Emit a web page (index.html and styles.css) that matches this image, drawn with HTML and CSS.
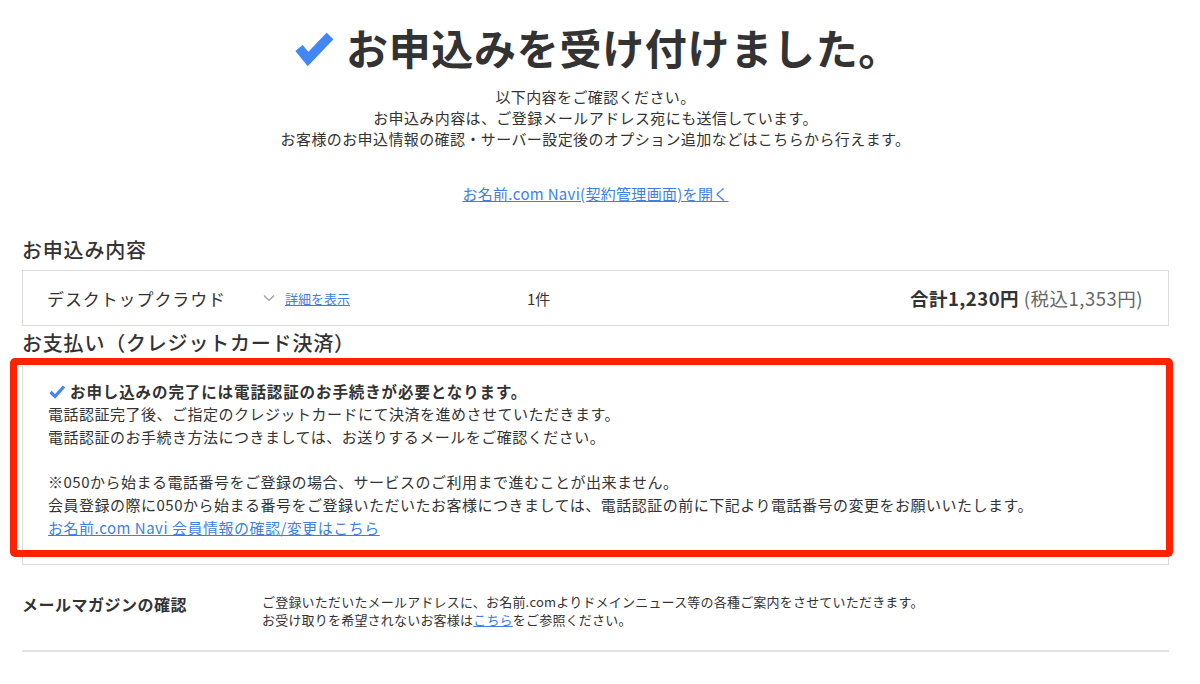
FILE: index.html
```html
<!DOCTYPE html>
<html lang="ja">
<head>
<meta charset="utf-8">
<title>お申込みを受け付けました。</title>
<link rel="stylesheet" href="styles.css">
</head>
<body>
<main class="page">
  <header class="hero">
    <h1 class="hero-title">
      <svg class="hero-check" width="46" height="44" viewBox="0 0 46 44" aria-hidden="true"><polyline points="9,23 18,34 40,11" fill="none" stroke="#4285f4" stroke-width="9.5"/></svg>
      <span>お申込みを受け付けました。</span>
    </h1>
    <p class="hero-lead">以下内容をご確認ください。<br>お申込み内容は、ご登録メールアドレス宛にも送信しています。<br>お客様のお申込情報の確認・サーバー設定後のオプション追加などはこちらから行えます。</p>
    <p class="hero-link"><a href="#">お名前.com Navi(契約管理画面)を開く</a></p>
  </header>

  <section class="section">
    <h2 class="section-title">お申込み内容</h2>
    <div class="order-box">
      <div class="order-left">
        <span class="order-name">デスクトップクラウド</span>
        <svg class="chevron" width="12" height="8" viewBox="0 0 12 8" aria-hidden="true"><polyline points="1,1.5 6,6.5 11,1.5" fill="none" stroke="#999" stroke-width="1.2"/></svg>
        <a href="#" class="detail-link">詳細を表示</a>
      </div>
      <span class="order-qty">1件</span>
      <span class="order-price"><b>合計1,230円</b> <span class="tax">(税込1,353円)</span></span>
    </div>
  </section>

  <section class="section">
    <h2 class="section-title pay-title">お支払い（クレジットカード決済）</h2>
    <div class="pay-wrap">
      <div class="pay-box">
        <p class="pay-lead"><svg class="small-check" width="18" height="15" viewBox="0 0 18 15" aria-hidden="true"><polyline points="2.5,8 7,12.5 16,2.5" fill="none" stroke="#4285f4" stroke-width="3.2"/></svg>お申し込みの完了には電話認証のお手続きが必要となります。</p>
        <p>電話認証完了後、ご指定のクレジットカードにて決済を進めさせていただきます。<br>電話認証のお手続き方法につきましては、お送りするメールをご確認ください。</p>
        <p class="pay-note">※050から始まる電話番号をご登録の場合、サービスのご利用まで進むことが出来ません。<br>会員登録の際に050から始まる番号をご登録いただいたお客様につきましては、電話認証の前に下記より電話番号の変更をお願いいたします。<br><a href="#">お名前.com Navi 会員情報の確認/変更はこちら</a></p>
      </div>
      <div class="highlight" aria-hidden="true"></div>
    </div>
  </section>

  <section class="mail-row">
    <h3 class="mail-title">メールマガジンの確認</h3>
    <p class="mail-text">ご登録いただいたメールアドレスに、お名前.comよりドメインニュース等の各種ご案内をさせていただきます。<br>お受け取りを希望されないお客様は<a href="#">こちら</a>をご参照ください。</p>
  </section>
</main>
</body>
</html>
```

FILE: styles.css
```css
* { box-sizing: border-box; }
html, body { margin: 0; padding: 0; background: #fff; }
body {
  font-family: "Noto Sans CJK JP", "Noto Sans", sans-serif;
  color: #333;
  width: 1200px;
  height: 684px;
  overflow: hidden;
}
a { color: #3d7fe6; text-decoration: underline; }
p, h1, h2, h3 { margin: 0; }

.page { padding: 0 31px 0 22px; }

.hero { text-align: center; padding-top: 19px; }
.hero-title {
  display: flex;
  justify-content: center;
  align-items: center;
  gap: 10px;
  font-size: 42px;
  line-height: 56px;
  font-weight: 700;
  letter-spacing: 0.7px;
  color: #333;
}
.hero-check { flex: none; }
.hero-lead {
  margin-top: 11px;
  font-size: 15px;
  letter-spacing: 0.4px;
  line-height: 21px;
}
.hero-link {
  margin-top: 34px;
  font-size: 15px;
  line-height: 21px;
  letter-spacing: 0.3px;
}

.section-title {
  font-size: 20px;
  line-height: 28px;
  font-weight: 500;
  letter-spacing: 0.8px;
  margin-top: 32px;
}
.pay-title { margin-top: 3px; }

.order-box {
  margin-top: 6px;
  height: 56px;
  border: 1px solid #dcdcdc;
  display: flex;
  align-items: center;
  padding: 0 25px 0 24px;
}
.order-left { width: 480px; display: flex; align-items: center; flex: none; }
.order-name { font-size: 17px; letter-spacing: 0.9px; width: 216px; flex: none; }
.chevron { margin-right: 10px; }
.detail-link { font-size: 13px; }
.order-qty { font-size: 15px; }
.order-price { margin-left: auto; font-size: 18.5px; letter-spacing: 0.5px; }
.order-price b { font-weight: 700; }
.tax { color: #666; font-weight: 400; }

.pay-wrap { position: relative; margin-top: 5px; }
.pay-box {
  border: 1px solid #dcdcdc;
  padding: 16px 25px 25px 25px;
  font-size: 15px;
  letter-spacing: 0.5px;
  line-height: 22.7px;
}
.pay-lead {
  font-weight: 700;
  font-size: 15.5px;
  letter-spacing: 0.9px;
  line-height: 24px;
  display: flex;
  align-items: center;
}
.small-check { margin-right: 4px; flex: none; }
.pay-note { margin-top: 22.7px; }

.highlight {
  position: absolute;
  left: -12px;
  right: -4px;
  top: -4px;
  bottom: 8px;
  border: 7px solid #ff2200;
  border-radius: 5px;
  pointer-events: none;
}

.mail-row {
  display: flex;
  align-items: flex-start;
  padding: 28px 0 21px 0;
  border-bottom: 2px solid #e2e2e2;
}
.mail-title {
  width: 240px;
  flex: none;
  font-size: 16px;
  line-height: 22px;
  font-weight: 700;
  letter-spacing: 0.5px;
}
.mail-text {
  font-size: 13px;
  line-height: 18px;
  letter-spacing: 0.2px;
}
```
